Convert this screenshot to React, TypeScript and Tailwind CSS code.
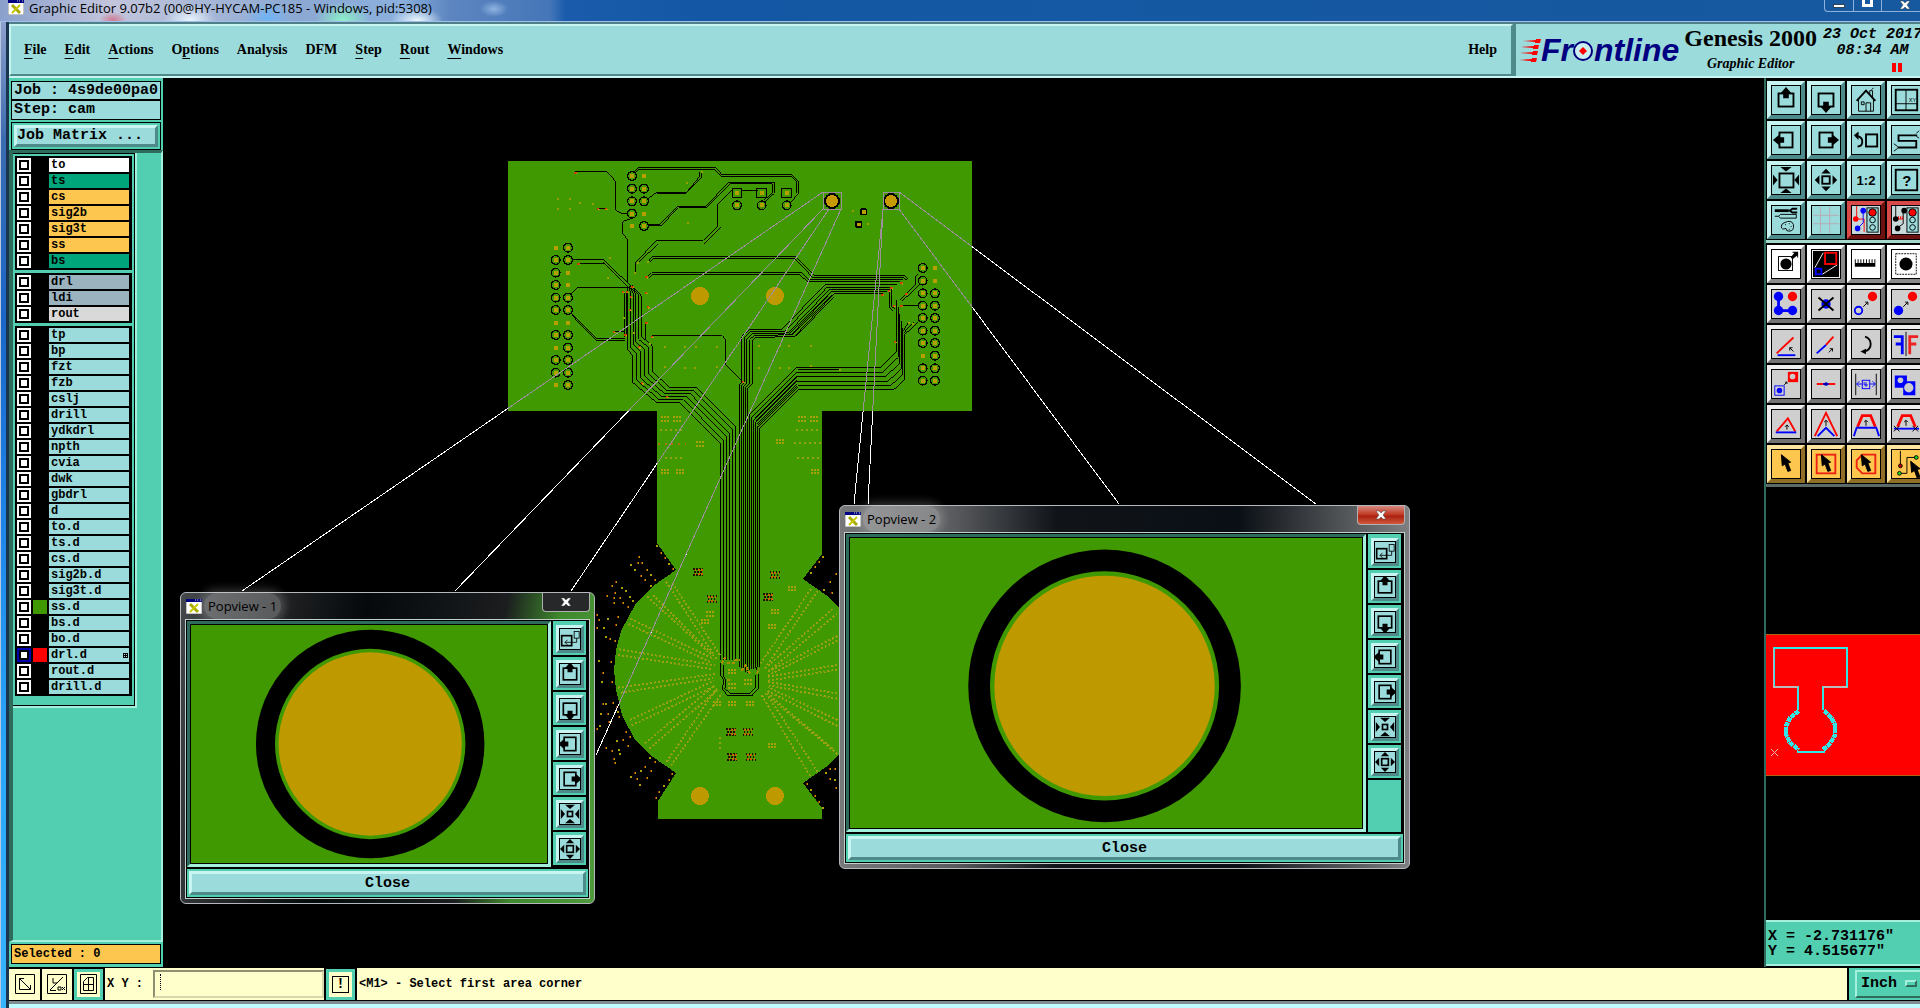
import { useState, type ReactNode } from "react";
import clsx from "clsx";

type Pt = [number, number];

const BEVEL = "border-3 border-t-[#c8f4f2] border-l-[#c8f4f2] border-b-[#4f8a8a] border-r-[#4f8a8a]";

/* ---------- icons, all on a 30 x 30 grid ---------- */

const arrowBox = (deg: number) => (
  <g transform={`rotate(${deg} 15 15)`}>
    <rect x="7" y="8" width="16" height="14" fill="none" stroke="#000" strokeWidth="2" />
    <path d="M15 1l6 7h-3v5h-6V8H9z" />
  </g>
);

const fourArrows = (inward: boolean) =>
  [0, 90, 180, 270].map((d) => (
    <path key={d} transform={`rotate(${d} 15 15)`} d={inward ? "M9 1h12l-6 5z" : "M15 3l5 5H10z"} />
  ));

const cursor = <path d="M10 5l1 12 3-2 3 8 3-1-3-8 3-1z" stroke="#000" />;
const tinyUp = <path d="M15 17v-6m-2 2l2-2 2 2" fill="none" stroke="#000" />;
const tinyDiag = <path d="M12 18l5-5m-3 0h3v3" fill="none" stroke="#000" />;

const lights = (
  <g>
    <rect x="16" y="2" width="12" height="26" fill="#9bdbdb" stroke="#000" />
    <circle cx="22" cy="7" r="4" fill="red" stroke="#000" />
    <circle cx="22" cy="15" r="3" fill="none" stroke="#000" />
    <circle cx="22" cy="23" r="3" fill="none" stroke="#000" />
  </g>
);

const icons: Record<string, ReactNode> = {
  up: arrowBox(0),
  down: arrowBox(180),
  left: arrowBox(270),
  right: arrowBox(90),
  home: (
    <g fill="none" stroke="#000">
      <path d="M5 16L15 5l10 11" strokeWidth="2" />
      <path d="M7 14v13h16V14M15 27v-9h5v9M10 17h3v3h-3zM19 9V5h3v7M21 4l2-2" />
    </g>
  ),
  viewports: (
    <g fill="none" stroke="#000">
      <rect x="4" y="4" width="23" height="22" strokeWidth="2" />
      <path d="M15 4v22M4 19h23" />
      <text x="18" y="17" fontSize="6" fill="#000" stroke="none">XY</text>
    </g>
  ),
  previous: (
    <g fill="none" stroke="#000" strokeWidth="2">
      <rect x="15" y="9" width="12" height="13" />
      <path d="M5 11q6 0 6 6 0 5-5 5" />
      <path d="M7 6v9l-5-5z" fill="#000" stroke="none" />
    </g>
  ),
  path: (
    <g fill="none" stroke="#000">
      <path d="M27 10H7v6h19v7H6" strokeWidth="2" />
      <path d="M26 8l3-3M26 11l3 2M6 22l-4-3M6 24l-4 3" />
    </g>
  ),
  fitIn: (
    <g>
      <rect x="8" y="8" width="15" height="15" fill="none" stroke="#000" strokeWidth="2" />
      {fourArrows(true)}
    </g>
  ),
  fitOut: (
    <g>
      <rect x="11" y="11" width="8" height="8" fill="none" stroke="#000" strokeWidth="2" />
      {fourArrows(false)}
    </g>
  ),
  ratio: <text x="15" y="20" textAnchor="middle" fontSize="14" fontWeight="bold">1:2</text>,
  query: (
    <g>
      <rect x="4" y="4" width="23" height="22" fill="none" stroke="#000" strokeWidth="2" />
      <text x="16" y="21" textAnchor="middle" fontSize="16" fontWeight="bold">?</text>
    </g>
  ),
  setup: (
    <g fill="none" stroke="#000">
      <path d="M3 5h15" strokeWidth="3" />
      <path d="M27 3h-5l-3 2 3 2h5" strokeWidth="2" />
      <path d="M3 11h4l2-2h17v4H9l-2-2" />
      <path d="M13 18q8-4 10 2 1 7-5 7-3 0-3-3-5 2-5-2 0-3 3-4z" />
      <path d="M14 20h1M18 19h1M20 22h1M18 25h1" />
    </g>
  ),
  grid: <path d="M9 1v28M19 1v28M1 10h28M1 19h28" stroke="#b9a9b5" fill="none" />,
  signalA: (
    <g>
      <rect width="30" height="30" fill="#c9d9d9" />
      <path d="M5 0v14h8v14" stroke="red" fill="none" />
      <path d="M12 4v14L6 24" stroke="#00f" fill="none" />
      <circle cx="12" cy="5" r="3" fill="#00f" />
      <circle cx="6" cy="24" r="3" fill="#00f" />
      <circle cx="4" cy="14" r="3" fill="red" />
      {lights}
    </g>
  ),
  signalB: (
    <g>
      <rect width="30" height="30" fill="#c9d9d9" />
      <path d="M4 0v14M12 4v15l-7 5" stroke="#000" fill="none" />
      <path d="M5 14h7M7 11v3M9 11v3M11 11v3" stroke="red" fill="none" />
      <circle cx="13" cy="5" r="3" />
      <circle cx="4" cy="14" r="3" />
      <circle cx="6" cy="24" r="3" />
      {lights}
    </g>
  ),
  panFeature: (
    <g>
      <rect x="7" y="7" width="15" height="15" fill="none" stroke="#000" />
      <circle cx="15" cy="15" r="6" />
      <path d="M20 8l4-5h-2V2h6v6h-1V6l-5 4z" />
    </g>
  ),
  popview: (
    <g fill="none">
      <rect x="1" y="1" width="28" height="28" fill="#000" />
      <path d="M3 19l9-16M11 26l16-10" stroke="#fff" />
      <rect x="14" y="3" width="12" height="12" stroke="red" strokeWidth="2" />
      <rect x="4" y="20" width="6" height="6" stroke="#00f" strokeWidth="2" />
    </g>
  ),
  ruler: <path d="M3 18V10h1v4h2v-4h1v4h2v-4h1v4h2v-4h1v4h2v-4h1v4h2v-4h1v4h2v-4h1v4h2v-4h1v8z" />,
  select: (
    <g>
      <rect x="4" y="4" width="22" height="22" fill="none" stroke="#000" strokeDasharray="2 1" />
      <circle cx="15" cy="15" r="7" />
    </g>
  ),
  copyNet: (
    <g fill="#00f">
      <path d="M7 7v15h15" fill="none" stroke="#00f" strokeWidth="3" />
      <circle cx="7" cy="7" r="5" />
      <circle cx="7" cy="22" r="5" />
      <circle cx="22" cy="22" r="5" />
      <circle cx="22" cy="7" r="5" fill="red" />
    </g>
  ),
  remove: (
    <g>
      <circle cx="15" cy="15" r="5" fill="#00f" />
      <path d="M7 8l16 14M23 8L7 22" stroke="#000" strokeWidth="2" />
    </g>
  ),
  copyTo: (
    <g>
      <circle cx="7" cy="22" r="4" fill="none" stroke="#00f" strokeWidth="2" />
      <circle cx="22" cy="7" r="5" fill="red" />
      {tinyDiag}
    </g>
  ),
  moveTo: (
    <g>
      <circle cx="7" cy="22" r="5" fill="#00f" />
      <circle cx="22" cy="7" r="5" fill="red" />
      {tinyDiag}
    </g>
  ),
  angle: (
    <g fill="none">
      <path d="M5 25L23 8" stroke="red" strokeWidth="2" />
      <path d="M6 27h19" stroke="#00f" strokeWidth="2" />
      <path d="M23 23l-4-4m0 3v-3h3" stroke="#000" />
    </g>
  ),
  stretch: (
    <g fill="none">
      <path d="M15 16l8-9" stroke="red" strokeWidth="2" />
      <path d="M5 25l10-9" stroke="#00f" strokeWidth="2" />
      <path d="M18 24l4-4m-3 0h3v3" stroke="#000" />
    </g>
  ),
  rotate: (
    <g>
      <path d="M14 7q6 2 6 8t-6 8" fill="none" stroke="#000" strokeWidth="2" />
      <path d="M15 20v6l-6-3z" />
    </g>
  ),
  mirror: (
    <g fill="none" strokeWidth="3">
      <path d="M2 7h9v19M4 15h7" stroke="#00f" />
      <path d="M15 2v26" stroke="#000" strokeWidth="1" />
      <path d="M28 7h-9v19M26 15h-7" stroke="#e22" />
    </g>
  ),
  scale: (
    <g>
      <rect x="17" y="2" width="11" height="11" fill="red" />
      <circle cx="22" cy="7" r="3" fill="#ccc" />
      <rect x="3" y="17" width="10" height="10" fill="none" stroke="#00f" />
      <circle cx="8" cy="22" r="3" fill="#00f" />
      <path d="M13 16l3-3m-2 0h2v2" fill="none" stroke="#000" />
    </g>
  ),
  resize: (
    <g>
      <path d="M5 15h20" stroke="red" strokeWidth="2" />
      <path d="M12 15h6" stroke="#00f" strokeWidth="2" />
      <circle cx="15" cy="15" r="2" fill="#00a" />
    </g>
  ),
  spacing: (
    <g fill="none" stroke="#00f">
      <path d="M4 4v23M26 4v23" stroke="#000" />
      <rect x="11" y="11" width="8" height="9" />
      <path d="M5 15h6M19 15h6M8 12l-3 3 3 3M22 12l3 3-3 3M13 13v3h4M15 13v5" />
    </g>
  ),
  merge: (
    <g>
      <path d="M3 6h13v6h9v15H12v-8H3z" fill="#00f" />
      <circle cx="9" cy="11" r="3" fill="#ccc" />
      <circle cx="18" cy="19" r="5" fill="#ccc" />
    </g>
  ),
  lowTriangle: (
    <g fill="none">
      <path d="M5 23L17 9l8 14" stroke="red" strokeWidth="2" />
      <path d="M4 24h22" stroke="#00f" strokeWidth="2" />
      <path d="M16 21v-5m-2 2l2-2 2 2" stroke="#000" />
    </g>
  ),
  highTriangle: (
    <g fill="none">
      <path d="M3 28L15 3l12 25" stroke="red" strokeWidth="2" />
      <path d="M6 28l9-9 9 9" stroke="#00f" strokeWidth="2" />
      {tinyUp}
    </g>
  ),
  trapezoid: (
    <g fill="none">
      <path d="M6 18l5-12h9l5 12" stroke="red" strokeWidth="3" />
      <path d="M2 28l3-9h21l3 9" stroke="#00f" strokeWidth="2" />
      {tinyUp}
    </g>
  ),
  trapezoidCut: (
    <g fill="none">
      <path d="M6 18l5-12h9l5 12" stroke="red" strokeWidth="3" />
      <path d="M2 20h27" stroke="#00f" strokeWidth="2" />
      <path d="M2 17l6 6m0-6l-6 6M22 17l6 6m0-6l-6 6" stroke="#000" />
      {tinyUp}
    </g>
  ),
  pick: cursor,
  pickFrame: (
    <g>
      <rect x="5" y="5" width="20" height="20" fill="none" stroke="#e21" strokeWidth="2" />
      {cursor}
    </g>
  ),
  pickPoly: (
    <g>
      <path d="M11 5h14v20H11l-6-6v-8z" fill="none" stroke="#e21" strokeWidth="2" />
      {cursor}
    </g>
  ),
  pickNet: (
    <g>
      <path d="M9 1v15M9 25h7V8h10" fill="none" stroke="#000" />
      <circle cx="9" cy="17" r="2" fill="#c00" stroke="#000" />
      <circle cx="8" cy="25" r="2" fill="#2d2" stroke="#000" />
      <circle cx="26" cy="8" r="2" fill="#2d2" stroke="#000" />
      <g transform="translate(10 7)">{cursor}</g>
    </g>
  ),
  detach: (
    <g fill="none" stroke="#000">
      <rect x="5" y="11" width="12" height="12" strokeWidth="2" />
      <rect x="20" y="6" width="6" height="8" />
      <path d="M23 14v5H9m3-3l-3 3 3 3" />
    </g>
  ),
  zoomIn: (
    <g>
      <rect x="12" y="12" width="6" height="6" fill="none" stroke="#000" strokeWidth="2" />
      {[0, 90, 180, 270].map((d) => (
        <path key={d} transform={`rotate(${d} 15 15)`} d="M9 4h12l-6 5z" />
      ))}
    </g>
  ),
};

type IconProps = { name: string; size?: string; viewBox?: string };

function Icon({ name, size = "size-[30px]", viewBox = "0 0 30 30" }: IconProps) {
  return (
    <svg viewBox={viewBox} className={clsx(size, "block border border-black font-['Liberation_Sans',sans-serif]")} aria-hidden="true">
      {icons[name]}
    </svg>
  );
}

const viewTools = [
  "up", "down", "home", "viewports",
  "left", "right", "previous", "path",
  "fitIn", "fitOut", "ratio", "query",
  "setup", "grid", "signalA", "signalB",
];

const editTools = [
  "panFeature", "popview", "ruler", "select",
  "copyNet", "remove", "copyTo", "moveTo",
  "angle", "stretch", "rotate", "mirror",
  "scale", "resize", "spacing", "merge",
  "lowTriangle", "highTriangle", "trapezoid", "trapezoidCut",
  "pick", "pickFrame", "pickPoly", "pickNet",
];

const toolTone = (name: string) => {
  if (name.startsWith("signal")) return "bg-[#b22222] border-t-[#d84a4a] border-l-[#d84a4a] border-b-[#6d1010] border-r-[#6d1010]";
  if (name.startsWith("pick")) return "bg-[#fdc64f] border-t-[#ffe3a0] border-l-[#ffe3a0] border-b-[#8f6f28] border-r-[#8f6f28]";
  if (["panFeature", "popview", "ruler", "select"].includes(name)) return "bg-white border-t-white border-l-white border-b-[#8a8a8a] border-r-[#8a8a8a]";
  if (editTools.includes(name)) return "bg-[#cfcfcf] border-t-[#efefef] border-l-[#efefef] border-b-[#727272] border-r-[#727272]";
  return "bg-[#9bdbdb] border-t-[#c8f4f2] border-l-[#c8f4f2] border-b-[#4f8a8a] border-r-[#4f8a8a]";
};

function ToolGrid({ names }: { names: string[] }) {
  return (
    <div className="grid grid-cols-[repeat(4,38px)] gap-[2px] bg-black p-[1px]">
      {names.map((name) => (
        <button key={name} aria-label={name} className={clsx("size-[38px] border-4", toolTone(name))}>
          <Icon name={name} />
        </button>
      ))}
    </div>
  );
}

/* ---------- layer list ---------- */

type Layer = { name: string; tone?: string; swatch?: string; active?: boolean };

const plain = (names: string): Layer[] => names.split(" ").map((name) => ({ name }));

const layerGroups: Layer[][] = [
  [
    { name: "to", tone: "bg-white" },
    { name: "ts", tone: "bg-[#00a57c]" },
    { name: "cs", tone: "bg-[#fdc64f]" },
    { name: "sig2b", tone: "bg-[#fdc64f]" },
    { name: "sig3t", tone: "bg-[#fdc64f]" },
    { name: "ss", tone: "bg-[#fdc64f]" },
    { name: "bs", tone: "bg-[#00a57c]" },
  ],
  [
    { name: "drl", tone: "bg-[#9bb3bf]" },
    { name: "ldi", tone: "bg-[#9bb3bf]" },
    { name: "rout", tone: "bg-[#d9d9d9]" },
  ],
  [
    ...plain("tp bp fzt fzb cslj drill ydkdrl npth cvia dwk gbdrl d to.d ts.d cs.d sig2b.d sig3t.d"),
    { name: "ss.d", swatch: "bg-[#409900]" },
    ...plain("bs.d bo.d"),
    { name: "drl.d", swatch: "bg-[#ff0000]", active: true },
    ...plain("rout.d drill.d"),
  ],
];

function LayerRow({ layer }: { layer: Layer }) {
  return (
    <div className="flex h-4 items-center gap-[2px]">
      <span className={clsx("flex size-[14px] items-center justify-center", layer.active ? "bg-[#0000b0]" : "bg-white")}>
        <input id={`layer-${layer.name}`} type="checkbox" className="size-[10px] appearance-none border-2 border-black bg-white" />
      </span>
      <span className={clsx("size-[14px]", layer.swatch)} />
      <label
        htmlFor={`layer-${layer.name}`}
        className={clsx("flex h-[14px] flex-1 items-center justify-between pl-[2px] pr-[1px] text-[12px] leading-[14px]", layer.tone ?? "bg-[#9bdbdb]")}
      >
        {layer.name}
        {layer.active && (
          <svg width="5" height="5" viewBox="0 0 5 5" aria-hidden="true">
            <path d="M0 0h5v5H0zM1 1v1h1V1zM3 1v1h1V1zM1 3v1h1V3zM3 3v1h1V3z" fillRule="evenodd" />
          </svg>
        )}
      </label>
    </div>
  );
}

function Sidebar() {
  return (
    <aside className="flex w-[154px] shrink-0 flex-col bg-[#52cfb0] font-['Liberation_Mono',monospace] font-bold">
      <div className="flex flex-col px-[2px] pt-[3px]">
        <div className="h-[19px] border border-black bg-[#9bdbdb] pl-[2px] text-[15px] leading-[17px] whitespace-nowrap">Job : 4s9de00pa0</div>
        <div className="h-[20px] border border-black bg-[#9bdbdb] pl-[2px] text-[15px] leading-[18px]">Step: cam</div>
        <div className="mt-[2px] border border-black p-[2px]">
          <button className={clsx("block h-[22px] w-full bg-[#9bdbdb] text-left text-[15px] leading-4 whitespace-nowrap", BEVEL)}>Job Matrix ...</button>
        </div>
      </div>
      <div className="flex-1 border-t-3 border-r-2 border-b-2 border-l-4 border-t-[#2e6b5c] border-r-[#a5efdd] border-b-[#a5efdd] border-l-[#2e6b5c]">
        <div className="w-[124px] border-r-2 border-b-2 border-[#a5efdd]">
          <div className="flex flex-col gap-[3px] border border-l-0 border-black px-[2px] pt-[2px] pb-[9px]">
            {layerGroups.map((group, i) => (
              <div key={i} className="border-y border-r border-black bg-black px-[2px]">
                {group.map((layer) => (
                  <LayerRow key={layer.name} layer={layer} />
                ))}
              </div>
            ))}
          </div>
        </div>
      </div>
      <div className="mx-[2px] mt-[2px] mb-[3px] h-5 border border-black bg-[#fdc64f] pl-[2px] text-[12px] leading-[18px]">Selected : 0</div>
    </aside>
  );
}

/* ---------- board drawing, in thirds of a pixel ---------- */

const toPoints = (pts: Pt[]) => pts.map((p) => p.join(",")).join(" ");

// n evenly spaced tracks between two outer ones
const bundle = (a: Pt[], b: Pt[], n: number): Pt[][] =>
  Array.from({ length: n }, (_, i) => {
    const t = i / (n - 1);
    return a.map(([x, y], k): Pt => [x + (b[k][0] - x) * t, y + (b[k][1] - y) * t]);
  });

const tracks: Pt[][] = [
  ...bundle(
    [[395, 405], [424, 438], [424, 560], [456, 585], [458, 665], [508, 712], [590, 712], [706, 828], [706, 1530]],
    [[383, 412], [384, 425], [384, 600], [399, 618], [399, 698], [470, 758], [540, 758], [662, 882], [662, 1530]],
    6,
  ),
  ...bundle(
    [[1190, 405], [975, 405], [845, 538], [748, 538], [725, 560], [725, 695], [718, 706], [718, 1550]],
    [[1150, 430], [1003, 430], [883, 560], [768, 562], [757, 572], [757, 700], [742, 715], [742, 1570]],
    5,
  ),
  ...bundle(
    [[1190, 450], [1190, 605], [1142, 653], [888, 653], [750, 791], [750, 1560]],
    [[1213, 555], [1213, 690], [1180, 720], [895, 720], [779, 836], [779, 1550]],
    6,
  ),
  ...bundle([[866, 552], [985, 433]], [[888, 558], [1003, 440]], 3),
  ...bundle([[888, 668], [760, 796]], [[893, 712], [775, 830]], 5),
  ...bundle([[445, 335], [455, 320], [888, 320], [943, 377], [1215, 377], [1225, 388]], [[450, 335], [458, 327], [885, 327], [940, 384], [1212, 384], [1220, 390]], 2),
  ...bundle([[440, 383], [455, 368], [905, 368], [925, 388], [1210, 388]], [[446, 383], [458, 374], [900, 374], [922, 395], [1200, 395]], 2),
  ...bundle([[1255, 515], [1213, 555]], [[1225, 518], [1208, 545]], 3),
  [[225, 65], [320, 65], [347, 94], [347, 180], [365, 190], [385, 190]],
  [[396, 205], [368, 215], [368, 252], [383, 268], [383, 400]],
  [[403, 65], [416, 53], [647, 53], [667, 75], [877, 75], [895, 93], [895, 130], [875, 155]],
  [[403, 69], [418, 58], [644, 58], [664, 80], [874, 80], [890, 95], [890, 128]],
  [[606, 65], [606, 80], [560, 127], [470, 127], [445, 145]],
  [[600, 65], [600, 78], [556, 132], [472, 132]],
  [[445, 225], [478, 225], [534, 169], [617, 169], [686, 97], [823, 97], [823, 130], [795, 155]],
  [[445, 228], [482, 228], [536, 173], [620, 173], [690, 101], [817, 101], [817, 128], [793, 150]],
  [[695, 122], [653, 162], [653, 228], [610, 271], [470, 271], [406, 338], [406, 370]],
  [[662, 232], [613, 280]],
  [[474, 281], [416, 338]],
  [[723, 121], [773, 121]],
  [[290, 176], [320, 176]],
  [[218, 329], [310, 329], [395, 410]],
  [[308, 334], [388, 414]],
  [[235, 340], [312, 340], [384, 412]],
  [[213, 432], [232, 414], [380, 414]],
  [[213, 490], [290, 566], [375, 566]],
  [[216, 496], [288, 571], [375, 571]],
  [[375, 430], [375, 560]],
  [[379, 430], [379, 555]],
  [[340, 546], [372, 546]],
  [[438, 520], [438, 570]],
  [[455, 557], [667, 557], [677, 568], [677, 643], [730, 697]],
  [[1003, 430], [1145, 430]],
  [[1205, 468], [1255, 468]],
  [[1255, 370], [1247, 378], [1247, 402], [1200, 450]],
  [[1262, 400], [1205, 455]],
  [[1170, 420], [1170, 475], [1180, 482]],
  [[1175, 415], [1175, 470], [1186, 478]],
  [[895, 660], [1018, 660]],
  [[662, 1540], [662, 1575], [670, 1590], [668, 1620], [685, 1638], [755, 1638], [775, 1615], [775, 1575], [768, 1550]],
  [[670, 1545], [670, 1575], [676, 1590], [675, 1616], [690, 1630], [750, 1630], [768, 1612], [768, 1575]],
];

// x, y, ringed
const column = (x: number, ys: number[], ringed: number[]) => ys.map((y, i) => ({ x, y, ring: ringed.includes(i) }));
const leftYs = [293, 330, 368, 405, 443, 480, 518, 555, 593, 630, 668, 705];
const rightYs = [354, 392, 430, 467, 504, 542, 579, 617, 655, 692];
const topYs = [78, 116, 154, 191, 228];

const pins = [
  ...column(167, leftYs, [1, 2, 3, 4, 5, 7, 9, 10]),
  ...column(204, leftYs, [0, 1, 4, 5, 7, 8, 9, 10, 11]),
  ...column(1268, rightYs, [0, 1, 2, 3, 4, 5, 6, 8, 9]),
  ...column(1305, rightYs, [2, 3, 4, 5, 6, 7, 8, 9]),
  ...column(396, topYs, [0, 1, 2, 3]),
  ...column(432, topYs, [1, 2, 4]),
  ...[711, 785, 860].map((x) => ({ x, y: 166, ring: true })),
];

const vias: Pt[] = [
  [174, 147], [210, 147], [174, 177], [210, 177], [240, 159], [279, 162], [561, 99], [564, 219], [330, 324], [324, 384],
  [495, 591], [555, 591], [588, 591], [651, 591], [495, 651], [555, 654], [585, 654], [651, 651],
  [777, 588], [840, 588], [867, 588], [933, 588], [777, 654], [840, 654], [867, 654], [933, 648],
  [606, 66], [405, 370], [445, 337], [414, 338], [450, 582], [1020, 660], [1228, 518], [1238, 523], [372, 504], [402, 549],
  [1060, 184], [1105, 223],
];

const hotVias: Pt[] = [
  [227, 68], [295, 176], [318, 176], [236, 342], [398, 410], [369, 426], [381, 426], [393, 440], [438, 428], [390, 480], [445, 472],
  [440, 519], [342, 546], [377, 556], [456, 560], [418, 592], [426, 700], [501, 741], [729, 696], [1175, 415], [1167, 423], [1148, 435],
  [1205, 400], [1220, 432], [1182, 467], [1205, 468], [1186, 576], [440, 382],
];

// outer end to inner end
const spokes: [number, number, number, number][] = [
  [228, 545, 372, 765], [247, 550, 390, 765], [172, 590, 365, 765], [190, 585, 385, 780],
  [115, 672, 365, 788], [122, 657, 372, 777], [85, 765, 370, 808], [88, 748, 375, 796],
  [85, 863, 375, 822], [92, 878, 370, 835], [120, 960, 372, 842], [125, 976, 375, 858],
  [165, 1030, 375, 855], [178, 1046, 382, 870], [230, 1085, 380, 865], [243, 1097, 395, 880],
  [663, 567, 512, 790], [683, 572, 530, 798], [728, 627, 525, 805], [742, 640, 535, 815],
  [742, 708, 535, 815], [742, 722, 535, 826], [742, 795, 535, 830], [742, 809, 535, 842],
  [742, 880, 535, 846], [742, 896, 535, 856], [742, 960, 535, 862], [742, 978, 530, 872],
  [728, 1046, 530, 878], [742, 1062, 524, 880], [660, 1128, 515, 885], [683, 1115, 530, 882],
];

const rimDots: Pt[] = [
  [200, 437], [212, 459], [225, 473], [238, 491], [250, 507], [147, 471], [122, 496], [144, 490], [156, 490], [135, 510], [171, 510],
  [153, 527], [183, 525], [165, 541], [195, 541], [183, 557], [79, 546], [66, 559], [95, 563], [51, 587], [76, 579], [108, 574],
  [72, 595], [89, 595], [120, 590], [72, 608], [98, 608], [130, 603], [114, 620], [20, 645], [53, 657], [85, 652], [26, 660],
  [41, 684], [79, 675], [20, 683], [47, 711], [76, 722], [60, 716], [26, 783], [64, 786], [38, 818], [36, 846], [66, 846],
  [38, 911], [49, 911], [70, 908], [82, 920], [33, 943], [53, 943], [88, 950], [29, 978], [20, 987], [57, 967], [85, 935],
  [108, 995], [47, 1044], [82, 1024], [98, 1020], [66, 1054], [88, 1050], [120, 1010], [72, 1078], [89, 1063], [114, 1038],
  [76, 1090], [180, 1075], [195, 1087], [165, 1101], [153, 1112], [183, 1112], [134, 1119], [122, 1131], [142, 1137], [170, 1134],
  [150, 1154], [246, 1122], [236, 1140], [223, 1159], [208, 1176], [198, 1194], [698, 470], [687, 485], [675, 500], [662, 520],
  [738, 523], [720, 545], [703, 570], [727, 580], [650, 1152], [662, 1170], [675, 1188], [687, 1206], [698, 1223], [720, 1106],
  [735, 1108], [708, 1120], [720, 1137], [738, 1163], [735, 1140],
];

// small 3 x 2 footprints on the stem and disc
const footprints: Pt[] = [
  [225, 57], [261, 57], [330, 132], [225, 214], [270, 214], [636, 57], [672, 57], [570, 125], [675, 214],
  [360, 642], [345, 664], [555, 634], [546, 679], [426, 815], [426, 858], [475, 846], [381, 911], [426, 911], [480, 911], [606, 565], [546, 1036],
];
const darkParts: Pt[] = [[325, 515], [365, 598], [535, 590], [424, 996], [473, 996], [427, 1070], [482, 1070], [554, 525]];
const dottedRows: [number, number, number][] = [[210, 285, 90], [225, 280, 173], [618, 690, 90], [612, 692, 128], [620, 692, 173]];

// pad to popview corner
const leaders: [number, number, number, number][] = [
  [823, 192, 242, 591], [823, 209, 455, 591], [829, 209, 571, 591], [841, 209, 596, 755],
  [883, 209, 854, 504], [883, 209, 868, 504], [899, 209, 1119, 504], [899, 192, 1316, 504],
];

const OUTLINE =
  "M508 161H972V411H822V554L803 579L826 595L844 613L858 636L865 680L858 725L844 750L826 767L803 783L822 808V819H658V801L676 773L653 757L635 740L622 715L616 690L614 670L616 650L621 631L635 605L653 586L676 570L657 543V411H508Z";

function Board() {
  return (
    <svg className="absolute inset-0 size-full" shapeRendering="crispEdges" role="img" aria-label="Board layout">
      <g transform="translate(-163 -78)">
        <clipPath id="board-outline">
          <path d={OUTLINE} />
        </clipPath>
        <path d={OUTLINE} fill="#409900" />
        {[[700, 296], [775, 296], [700, 796], [775, 796]].map(([x, y]) => (
          <circle key={`${x}-${y}`} cx={x} cy={y} r="9" fill="#bf9900" />
        ))}
        <g transform="translate(500 150) scale(.33333)">
          {tracks.map((t, i) => (
            <polyline key={i} points={toPoints(t)} fill="none" stroke="#000" strokeWidth="3" />
          ))}
          {pins.map((p) => (
            <g key={`${p.x}-${p.y}`}>
              {p.ring && <circle cx={p.x} cy={p.y} r="13" fill="#409900" stroke="#000" strokeWidth="4" />}
              <rect x={p.x - 6} y={p.y - 6} width="12" height="12" fill="#b5a000" />
            </g>
          ))}
          {[711, 785, 860].map((x) => (
            <g key={x}>
              <rect x={x - 14} y="115" width="28" height="28" fill="none" stroke="#000" strokeWidth="3" />
              <rect x={x - 6} y="123" width="12" height="12" fill="#b5a000" />
            </g>
          ))}
          <rect x="1080" y="175" width="22" height="21" rx="6" />
          <rect x="1085" y="180" width="12" height="11" fill="#b5a000" />
          <rect x="1065" y="213" width="22" height="21" rx="6" />
          <rect x="1070" y="218" width="12" height="11" fill="#b5a000" />
          {vias.map(([x, y], i) => (
            <rect key={i} x={x - 3} y={y - 3} width="6" height="6" fill="#9aa000" />
          ))}
          {hotVias.map(([x, y], i) => (
            <g key={i}>
              <rect x={x - 4} y={y - 3} width="7" height="6" fill="#d03c00" />
              <rect x={x} y={y} width="5" height="4" fill="#bf9900" />
            </g>
          ))}
        </g>
        <g transform="translate(590 400) scale(.33333)">
          {spokes.map(([x1, y1, x2, y2], i) => (
            <line key={i} x1={x1} y1={y1} x2={x2} y2={y2} stroke="#96a010" strokeWidth="6" strokeDasharray="6 6" />
          ))}
          {dottedRows.map(([x1, x2, y], i) => (
            <line key={i} x1={x1} y1={y} x2={x2} y2={y} stroke="#96a010" strokeWidth="6" strokeDasharray="6 9" />
          ))}
          <line x1="204" y1="132" x2="288" y2="132" stroke="#b07010" strokeWidth="6" strokeDasharray="6 14" />
          <line x1="390" y1="1010" x2="390" y2="1048" stroke="#96a010" strokeWidth="6" strokeDasharray="6 9" />
          {footprints.map(([x, y], i) => (
            <g key={i} stroke="#a8a008" strokeWidth="6" strokeDasharray="6 3">
              <line x1={x - 12} y1={y - 5} x2={x + 12} y2={y - 5} />
              <line x1={x - 12} y1={y + 5} x2={x + 12} y2={y + 5} />
            </g>
          ))}
          {darkParts.map(([x, y], i) => (
            <g key={i} strokeWidth="6">
              <path d={`M${x - 15} ${y - 9}h30M${x - 12} ${y}h27M${x - 15} ${y + 9}h30`} stroke="#201000" strokeDasharray="4 5" />
              <path d={`M${x - 11} ${y - 6}h27M${x - 11} ${y + 6}h27`} stroke="#c86400" strokeDasharray="5 5" />
            </g>
          ))}
          <path d="M395 790l12-20M412 788h20l5-8h12M455 812l12-16 8 18 10 8M500 820l8-14M410 840h14" stroke="#b08a00" strokeWidth="6" fill="none" strokeDasharray="9 4" />
          {rimDots.map(([x, y], i) => (
            <g key={i}>
              <rect x={x - 3} y={y - 3} width="6" height="6" fill={i % 3 ? "#a02800" : "#a8a000"} />
              <rect x={x} y={y - 3} width="3" height="6" fill="#b0a000" />
            </g>
          ))}
        </g>
        <g fill="#c79a00" stroke="#000" strokeWidth="2">
          <circle cx="832" cy="201" r="7" />
          <circle cx="891" cy="201" r="7" />
        </g>
        <g stroke="#fff">
          {leaders.map(([x1, y1, x2, y2], i) => (
            <line key={i} x1={x1} y1={y1} x2={x2} y2={y2} />
          ))}
        </g>
        <g stroke="#9c8f9c" fill="none" clipPath="url(#board-outline)">
          {leaders.map(([x1, y1, x2, y2], i) => (
            <line key={i} x1={x1} y1={y1} x2={x2} y2={y2} />
          ))}
          <rect x="823" y="192" width="18" height="17" />
          <rect x="883" y="192" width="16" height="17" />
        </g>
      </g>
    </svg>
  );
}

/* ---------- popviews ---------- */

function AppIcon({ className }: { className?: string }) {
  return (
    <svg viewBox="0 0 16 15" className={clsx("h-[15px] w-4 shrink-0", className)} aria-hidden="true">
      <rect width="16" height="15" fill="#fff" />
      <rect width="16" height="3" fill="#000080" />
      <path d="M11 1h1M14 1h1M9 1h1" stroke="#ccc" />
      <path d="M4 5l8 8" stroke="#a8a800" strokeWidth="3" />
      <path d="M12 5l-8 8" stroke="#c8c800" strokeWidth="2" />
      <path d="M0 3v12h16V3" fill="none" stroke="#888" />
    </svg>
  );
}

const CloseGlyph = () => (
  <svg viewBox="0 0 12 10" className="h-[10px] w-3" aria-hidden="true">
    <path d="M1 1h3l2 2 2-2h3L8 5l3 4H8L6 7 4 9H1l3-4z" fill="#fff" stroke="#444" strokeWidth=".5" />
  </svg>
);

const popTools = ["detach", "up", "down", "left", "right", "zoomIn", "fitOut"];

type PopviewProps = {
  title: string;
  className: string;
  frame: string;
  closeTone: string;
  children: ReactNode;
};

function Popview({ title, className, frame, closeTone, children }: PopviewProps) {
  return (
    <section className={clsx("absolute flex flex-col rounded-[6px] border border-[#b4b8bc] px-[4px] pb-[4px]", className, frame)}>
      <header className="flex h-[26px] shrink-0 items-start pl-[1px]">
        <AppIcon className="mt-[6px]" />
        <h2 className="ml-[2px] rounded-full bg-white/25 px-1 font-['Open_Sans','Noto_Sans',sans-serif] text-[13px] leading-[26px] shadow-[0_0_8px_4px_rgba(255,255,255,0.2)]">
          {title}
        </h2>
        <button aria-label={`Close ${title}`} className={clsx("ml-auto flex h-[19px] w-[48px] items-center justify-center rounded-b-[4px] border border-t-0 border-[#b0b0b0]", closeTone)}>
          <CloseGlyph />
        </button>
      </header>
      <div className="flex min-h-0 flex-1 flex-col gap-[2px] border border-[#c0d0cc] bg-black p-[1px]">
        <div className="flex min-h-0 flex-1 gap-[2px] pr-[2px]">
          <div className="min-w-0 flex-1 border-3 border-t-[#2e6b5c] border-r-[#a5efdd] border-b-[#a5efdd] border-l-[#2e6b5c]">
            <div className="relative size-full overflow-hidden border border-black bg-[#409900]">{children}</div>
          </div>
          <div className="flex w-[33px] flex-col bg-[#52cfb0] pt-[1px]">
            {popTools.map((name) => (
              <div key={name} className="flex h-[35px] items-center justify-center border-b-2 border-black">
                <button aria-label={name} className={clsx("size-[28px] bg-[#9bdbdb]", BEVEL)}>
                  <Icon name={name} size="size-[22px]" viewBox="3 3 24 24" />
                </button>
              </div>
            ))}
          </div>
        </div>
        <div className="bg-[#52cfb0] p-[2px]">
          <button className={clsx("block h-[24px] w-full bg-[#9bdbdb] font-['Liberation_Mono',monospace] text-[15px] leading-5 font-bold", BEVEL)}>Close</button>
        </div>
      </div>
    </section>
  );
}

function Pad({ outer, inner, copper, dx, dy }: { outer: number; inner: number; copper: number; dx: number; dy: number }) {
  return (
    <svg className="size-full" viewBox="-100 -100 200 200" overflow="visible" aria-hidden="true">
      <g transform={`translate(${dx} ${dy})`}>
        <circle r={outer} fill="#000" />
        <circle r={inner} fill="#409900" />
        <circle r={copper} fill="#bf9900" />
      </g>
    </svg>
  );
}

/* ---------- header and status bar ---------- */

// label, index of the underlined letter
const menus: [string, number][] = [
  ["File", 0], ["Edit", 0], ["Actions", 0], ["Options", 1], ["Analysis", -1], ["DFM", -1], ["Step", 0], ["Rout", 0], ["Windows", 0],
];

// desktop icons showing through the glass
const GLOW =
  "bg-[radial-gradient(14px_8px_at_113px_20px,#d07a90,transparent),radial-gradient(26px_16px_at_190px_20px,#e8f4ff,transparent),radial-gradient(24px_18px_at_268px_18px,#6fb4f4,transparent),radial-gradient(28px_18px_at_343px_20px,#8df0c8,transparent),radial-gradient(26px_14px_at_417px_21px,#f0faff,transparent),radial-gradient(14px_8px_at_494px_9px,#8fb4e0,transparent),linear-gradient(90deg,#8aa0cc_0px,#c3c5dc_110px,#aebbd8_180px,#8ba8d2_300px,#8bb0dd_400px,#5d86c0_450px,#4576b8_550px,#1a5cab_565px,#1458a5_700px,#17599f_100%)]";

function TitleBar() {
  return (
    <div className={clsx("flex h-[22px] items-start justify-between border-b border-[#9fc0e8]", GLOW)}>
      <div className="flex items-start gap-[5px] pl-2">
        <AppIcon />
        <h1 className="font-['Open_Sans','Noto_Sans',sans-serif] text-[13px] leading-4 whitespace-nowrap">
          Graphic Editor 9.07b2 (00@HY-HYCAM-PC185 - Windows, pid:5308)
        </h1>
      </div>
      <div className="flex h-3 rounded-bl-[4px] border-b border-l border-[#8fb2dc]">
        <button aria-label="Minimize" className="flex w-[29px] items-center justify-center border-r border-[#8fb2dc]">
          <span className="h-1 w-3 border border-[#345] bg-white" />
        </button>
        <button aria-label="Restore" className="flex w-[28px] items-start justify-center border-r border-[#8fb2dc]">
          <span className="h-[7px] w-[11px] border-3 border-t-0 border-white" />
        </button>
        <button aria-label="Close" className="flex w-[38px] items-start justify-center pl-2">
          <CloseGlyph />
        </button>
      </div>
    </div>
  );
}

function Logo() {
  return (
    <div className="flex items-center" role="img" aria-label="Frontline">
      <svg width="22" height="24" viewBox="0 0 22 24" aria-hidden="true">
        <path d="M4 3l13-1V1h5l-1 4h-5V4zM2 9l13-1V7h5l-1 4h-5v-1zM1 15l13-1v-1h5l-1 4h-5v-1zM0 22l13-1v-1h5l-1 4h-5v-1z" fill="red" />
      </svg>
      <span className="flex items-center font-['Liberation_Sans',sans-serif] text-[32px] leading-8 font-bold text-[#000080] italic">
        Fr
        <svg width="21" height="22" viewBox="0 0 21 22" aria-hidden="true">
          <circle cx="10" cy="12" r="9" fill="#c9efef" stroke="#000080" strokeWidth="2" />
          <path d="M10 8l4 4-4 4-4-4z" fill="red" />
        </svg>
        ntline
      </span>
    </div>
  );
}

function Header() {
  return (
    <header className="flex h-[56px] shrink-0 border-t-2 border-b-2 border-t-[#4f7f88] border-b-[#c8f4f2] bg-[#9bdbdb]">
      <nav className="flex flex-1 items-center gap-[18px] border-2 border-t-[#c8f4f2] border-r-[#4f8a8a] border-b-[#4f8a8a] border-l-[#c8f4f2] pr-[14px] pl-[13px] font-['Liberation_Serif',serif] text-[14px] leading-5 font-bold">
        {menus.map(([label, at]) => (
          <button key={label}>
            {at < 0 ? (
              label
            ) : (
              <>
                {label.slice(0, at)}
                <u className="underline-offset-4">{label[at]}</u>
                {label.slice(at + 1)}
              </>
            )}
          </button>
        ))}
        <button className="ml-auto">Help</button>
      </nav>
      <div className="flex w-[407px] shrink-0 overflow-hidden border-l-3 border-[#4f8a8a] pl-[3px]">
        <Logo />
        <div className="ml-[5px] flex w-[136px] flex-col items-center font-['Liberation_Serif',serif] whitespace-nowrap">
          <span className="text-[24px] leading-7 font-bold">Genesis 2000</span>
          <span className="pt-[4px] text-[14px] leading-4 font-bold italic">Graphic Editor</span>
        </div>
        <div className="ml-[6px] flex shrink-0 flex-col items-center pt-[3px] font-['Liberation_Mono',monospace] text-[15px] leading-4 font-bold whitespace-nowrap italic">
          <span>23 Oct 2017</span>
          <span>08:34 AM</span>
          <span className="mt-[4px] flex gap-[2px] pl-[49px]">
            <i className="h-[9px] w-1 bg-[#ff0000]" />
            <i className="h-[9px] w-1 bg-[#ff0000]" />
          </span>
        </div>
      </div>
    </header>
  );
}

function OutlinePreview() {
  return (
    <svg className="h-[142px] w-full border-y border-[#b06010] bg-[#ff0000]" shapeRendering="crispEdges" role="img" aria-label="Profile overview">
      <g transform="translate(-26 -14) scale(.33333)" fill="none" stroke="#33e6e6" strokeWidth="6">
        <path d="M174 268V198H101V80H321V198H250V268M170 392H254" />
        <path d="M101 80V198H174M250 198H321" stroke="#b9b9b9" strokeWidth="4" />
        <path d="M176 270L150 290L138 315V340L150 365L176 386M252 270L274 290L286 315V340L272 365L250 386" strokeWidth="13" strokeDasharray="14 2" />
        <path d="M94 384l20 20m0-20l-20 20" stroke="#d9b9b9" strokeWidth="3" />
      </g>
    </svg>
  );
}

function ToolPanel() {
  return (
    <aside className="flex w-[156px] shrink-0 flex-col overflow-hidden border-l-2 border-[#2e6b5c] bg-black">
      <div className="border-b-3 border-[#a5d8cc] pt-[2px]">
        <ToolGrid names={viewTools} />
      </div>
      <div className="border-b-3 border-[#5a6a68] pt-[1px]">
        <ToolGrid names={editTools} />
      </div>
      <div className="flex flex-1 items-center pt-[2px]">
        <OutlinePreview />
      </div>
      <div className="mb-[1px] h-[46px] border-y-2 border-[#a5efdd] bg-[#52cfb0] pt-[7px] pl-[2px] font-['Liberation_Mono',monospace] text-[15px] leading-[15px] font-bold whitespace-nowrap">
        <div>X = -2.731176"</div>
        <div>Y = 4.515677"</div>
      </div>
    </aside>
  );
}

const creamKey = "flex h-[31px] items-center justify-center border-3";

function StatusBar() {
  const [coords, setCoords] = useState("");

  return (
    <footer className="flex h-[34px] shrink-0 items-center gap-[2px] bg-black font-['Liberation_Mono',monospace] text-[12px] font-bold">
      <button aria-label="Snap" className={clsx(creamKey, "w-[31px] border-[#ffffcc] bg-[#ffffcc]")}>
        <svg width="20" height="20" viewBox="0 0 20 20" fill="none" stroke="#000">
          <path d="M.5.5h19v19H.5zM4.500 4.500l11 11M4.500 9V4.500H9M11 15.500h4.500V11M4.500 9v6.500H11" />
        </svg>
      </button>
      <button aria-label="Angle snap" className={clsx(creamKey, "w-[30px] border-[#ffffcc] bg-[#ffffcc]")}>
        <svg width="20" height="20" viewBox="0 0 20 20" fill="none" stroke="#000">
          <path d="M.5.5h19v19H.5zM3 16L16 3M3 16.500h6M6 4v5h4M11 13h3v3h-3zM15 13l3 3M18 13l-3 3" />
        </svg>
      </button>
      <button aria-label="Grid snap" className={clsx(creamKey, "w-[29px] border-[#52cfb0] bg-[#ffffcc]")}>
        <svg width="17" height="20" viewBox="0 0 17 20" fill="none" stroke="#000">
          <path d="M.5.5h16v19H.5zM3.500 16.500v-9l4-4h6v13zM8.500 3v13M3 10.500h11" />
        </svg>
      </button>
      <div className="flex h-[32px] w-[219px] items-center bg-[#ffffcc]">
        <label htmlFor="xy" className="w-[46px] pl-[2px] text-[12px] whitespace-nowrap">X Y :</label>
        <div className="relative ml-[2px] flex-1">
          <input
            id="xy"
            value={coords}
            onChange={(e) => setCoords(e.target.value)}
            className="block h-[28px] w-full border-2 border-t-[#8f8f72] border-r-[#d8d8ac] border-b-[#d8d8ac] border-l-[#8f8f72] bg-[#ffffcc] px-2 outline-none"
          />
          <span className="absolute top-[4px] left-[7px] h-4 border-l border-dotted border-black" />
        </div>
      </div>
      <button aria-label="Interrupt" className={clsx(creamKey, "w-[29px] border-[#52cfb0] bg-[#ffffcc]")}>
        <span className="h-[17px] w-[17px] border border-black text-[14px] leading-[15px]">!</span>
      </button>
      <output className="flex h-[32px] flex-1 items-center bg-[#ffffcc] pl-[2px] text-[12px]">{"<M1> - Select first area corner"}</output>
      <div className="relative h-[32px] w-[71px] overflow-hidden bg-[#52cfb0] pt-[2px] pl-[6px]">
        <select
          aria-label="Units"
          className="block h-[28px] w-[78px] appearance-none border-2 border-t-[#a5efdd] border-r-[#2e6b5c] border-b-[#2e6b5c] border-l-[#a5efdd] pl-[4px] text-[15px] font-bold"
        >
          <option>Inch</option>
          <option>MM</option>
        </select>
        <span className="absolute top-[12px] left-[56px] h-[7px] w-[12px] border-2 border-t-[#a5efdd] border-r-[#2e6b5c] border-b-[#2e6b5c] border-l-[#a5efdd]" />
      </div>
    </footer>
  );
}

export default function App() {
  return (
    <div className="flex h-screen flex-col overflow-hidden bg-black text-black">
      <TitleBar />
      <div className="flex min-h-0 flex-1">
        <div className="w-[9px] shrink-0 border-r-3 border-l border-r-[#1a3550] border-l-[#b8c8e0] bg-[linear-gradient(#8ea0cc,#3b6cb0_12%,#1a66c8_30%,#1e84e8_50%,#2aa8fa_75%,#36b4ff)]" />
        <div className="flex min-w-0 flex-1 flex-col">
          <Header />
          <div className="flex min-h-0 flex-1">
            <Sidebar />
            <main className="relative min-w-0 flex-1 overflow-hidden bg-black">
              <Board />
              <Popview
                title="Popview - 1"
                className="top-[514px] left-[17px] h-[312px] w-[415px]"
                frame="bg-[linear-gradient(100deg,#45484b_0%,#1c1e20_25%,#05090b_40%,#1b1d1f_70%,#3f8a2c_82%,#4f9b3c_100%)]"
                closeTone="bg-[#26282a]"
              >
                <Pad outer={96} inner={80} copper={77} dx={1} dy={0} />
              </Popview>
              <Popview
                title="Popview - 2"
                className="top-[427px] left-[676px] h-[364px] w-[571px]"
                frame="bg-[linear-gradient(90deg,#77787a_0%,#595b5e_20%,#101419_38%,#0a0f15_70%,#505356_88%,#7d7f81_100%)]"
                closeTone="bg-[linear-gradient(#d58a80,#c0341f_50%,#a82010_55%,#d0583c)]"
              >
                <Pad outer={94} inner={79} copper={76} dx={-1} dy={2} />
              </Popview>
            </main>
            <ToolPanel />
          </div>
          <StatusBar />
          <div className="h-[7px] shrink-0 border-t-3 border-[#7f8c90] bg-[#bffcff]" />
        </div>
      </div>
    </div>
  );
}
